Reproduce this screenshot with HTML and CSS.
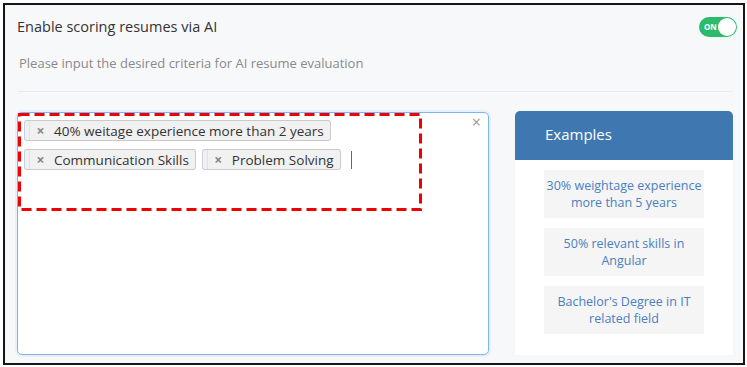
FILE: index.html
```html
<!DOCTYPE html>
<html>
<head>
    <title>AI resume scoring</title>
    <link rel="stylesheet" href="styles.css">
</head>
<body>
    <div class="frame">
        <div class="header">
            <span class="title">Enable scoring resumes via AI</span>
            <div class="toggle">
                <span class="toggle-label">ON</span>
                <span class="toggle-knob"></span>
            </div>
        </div>
        <p class="hint">Please input the desired criteria for AI resume evaluation</p>
        <div class="divider"></div>

        <div class="main">
            <div class="criteria">
                <span class="clear">&times;</span>
                <div class="tags">
                    <span class="tag"><span class="tag-remove">&times;</span>40% weitage experience more than 2 years</span>
                    <span class="tag"><span class="tag-remove">&times;</span>Communication Skills</span>
                    <span class="tag"><span class="tag-remove">&times;</span>Problem Solving</span>
                    <span class="caret"></span>
                </div>
                <svg class="highlight" width="404" height="98" viewBox="0 0 404 98">
                    <rect x="1.5" y="1.5" width="401" height="95" fill="none" stroke="#f00000" stroke-width="3" stroke-dasharray="10 5"></rect>
                </svg>
            </div>

            <div class="examples">
                <div class="examples-head">Examples</div>
                <div class="examples-body">
                    <div class="example">30% weightage experience more than 5 years</div>
                    <div class="example">50% relevant skills in Angular</div>
                    <div class="example">Bachelor's Degree in IT related field</div>
                </div>
            </div>
        </div>
    </div>
</body>
</html>
```

FILE: styles.css
```css
body {
    margin: 0;
    padding: 3px;
    font-family: "Open Sans", "Liberation Sans", sans-serif;
}

.frame {
    width: 742px;
    height: 362px;
    box-sizing: border-box;
    border: 2px solid #151515;
    background: #f7f8fa;
}

.header {
    display: flex;
    align-items: center;
    justify-content: space-between;
    padding: 12px 6px 0 12px;
}

.title {
    font-size: 14.5px;
    line-height: 20px;
    color: #333;
}

.toggle {
    position: relative;
    width: 38px;
    height: 20px;
    border-radius: 10px;
    background: #2bbb6b;
}

.toggle-label {
    position: absolute;
    left: 5px;
    top: 0;
    font-size: 8px;
    font-weight: bold;
    line-height: 20px;
    color: #fff;
}

.toggle-knob {
    position: absolute;
    right: 1px;
    top: 1px;
    width: 18px;
    height: 18px;
    border-radius: 50%;
    background: #fff;
}

.hint {
    margin: 16px 0 0 14px;
    font-size: 13px;
    line-height: 20px;
    color: #8a8a8a;
}

.divider {
    height: 1px;
    margin: 18px 10px 0 13px;
    background: #e9ebee;
}

.main {
    display: flex;
    gap: 26px;
    margin: 20px 0 0 12px;
}

.criteria {
    position: relative;
    width: 472px;
    height: 243px;
    box-sizing: border-box;
    border: 1px solid #7db4f0;
    border-radius: 5px;
    background: #fff;
    box-shadow: 0 0 0 2px #e6f0fb;
}

.clear {
    position: absolute;
    right: 7px;
    top: -2px;
    font-size: 16px;
    color: #999;
}

.tags {
    display: flex;
    flex-wrap: wrap;
    align-items: center;
    gap: 8px 6px;
    width: 380px;
    padding: 7px 6px;
}

.tag {
    display: flex;
    align-items: center;
    height: 21px;
    box-sizing: border-box;
    padding: 0 6px 0 4px;
    border: 1px solid #cacaca;
    border-left: 1px solid #c4d2e2;
    border-radius: 3px;
    background: #f1f1f1;
    font-size: 13.5px;
    color: #333;
    white-space: nowrap;
}

.tag-remove {
    width: 21px;
    margin-right: 3px;
    border-left: 1px solid #dbe3ec;
    font-size: 14px;
    font-weight: bold;
    color: #888;
    text-align: center;
}

.caret {
    width: 1px;
    height: 18px;
    margin-left: 4px;
    background: #666;
}

.highlight {
    position: absolute;
    left: 0;
    top: 0;
}

.examples {
    width: 218px;
    height: 244px;
    margin-top: -1px;
    background: #fff;
}

.examples-head {
    height: 49px;
    padding-left: 30px;
    border-radius: 5px 5px 0 0;
    background: #3f77b1;
    font-size: 15px;
    line-height: 46px;
    color: #fff;
}

.examples-body {
    display: flex;
    flex-direction: column;
    align-items: center;
    gap: 10px;
    padding-top: 10px;
}

.example {
    display: flex;
    align-items: center;
    justify-content: center;
    width: 160px;
    height: 48px;
    background: #f5f5f5;
    font-size: 12.5px;
    line-height: 17px;
    color: #4a7fc0;
    text-align: center;
}
```
